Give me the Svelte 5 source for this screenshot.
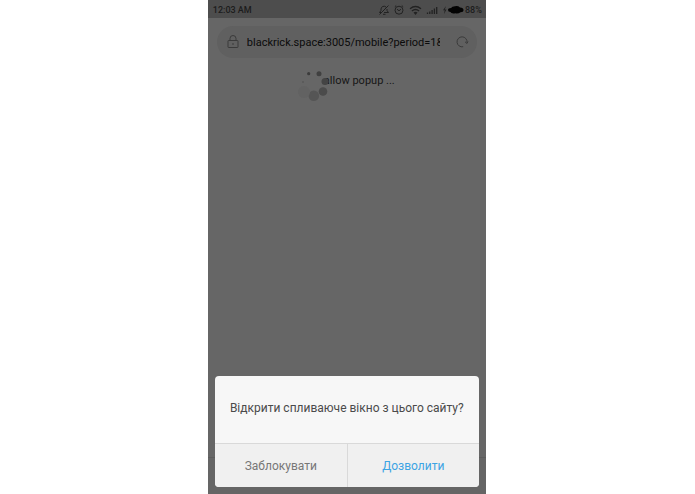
<script>
  let address = $state('blackrick.space:3005/mobile?period=1&');

  const dots = [
    { x: 6, y: 14, r: 0.7, color: '#4a4a4a' },
    { x: 11.7, y: 5.7, r: 1.6, color: '#3c3c3c' },
    { x: 22, y: 5.7, r: 2.5, color: '#404040' },
    { x: 28, y: 13.5, r: 3.5, color: '#444444' },
    { x: 26, y: 23.5, r: 4.3, color: '#4b4b4b' },
    { x: 16.8, y: 27.8, r: 5.3, color: '#555555' },
    { x: 7, y: 24, r: 6, color: '#626262' },
  ];
</script>

<style>
  :global(body) {
    margin: 0;
    background: #fff;
  }

  .phone {
    display: flex;
    flex-direction: column;
    width: 40%;
    min-height: 100vh;
    margin-left: 29.9%;
    /* the hairline is the top edge of the dimmed toolbar behind the dialog */
    background: linear-gradient(to top, #656565 36px, #5c5c5c 36px, #5c5c5c 37px, #666 37px);
    font-family: Roboto, "Noto Sans", sans-serif;
  }

  .status {
    display: flex;
    align-items: center;
    justify-content: space-between;
    box-sizing: border-box;
    height: 18px;
    padding: 1px 4px 0 5px;
    background: #4d4d4d;
    color: #1c1c1c;
    font-size: 9px;
    font-weight: 500;
  }

  .indicators {
    display: flex;
    align-items: center;
  }

  .indicators svg {
    display: block;
  }

  .address {
    display: flex;
    align-items: center;
    height: 32px;
    margin: 8px 9px 0;
    padding: 0 8px 0 9px;
    border-radius: 16px;
    background: #606060;
  }

  .address input {
    flex: 1;
    min-width: 0;
    margin: 0 15px 0 7px;
    padding: 0;
    border: 0;
    outline: 0;
    background: none;
    color: #0b0b0b;
    font: 11px Roboto, "Noto Sans", sans-serif;
  }

  .reload {
    display: flex;
    padding: 0;
    border: 0;
    background: none;
  }

  .page {
    flex: 1;
    padding-top: 15px;
    text-align: center;
  }

  .message {
    position: relative;
    display: inline-block;
    margin: 0;
    padding-left: 25px;
    color: #161616;
    font-size: 11px;
    line-height: 16px;
    vertical-align: top;
  }

  .spinner {
    position: absolute;
    top: -5px;
    left: -2px;
  }

  .dialog {
    margin: 0 7px 7px;
    border-radius: 4px;
    overflow: hidden;
    background: #f7f7f7;
  }

  .dialog p {
    margin: 0;
    padding: 22px 8px 25px;
    color: #4a4a4a;
    font-size: 12px;
    line-height: 20px;
    text-align: center;
  }

  .actions {
    display: grid;
    grid-template-columns: 1fr 1fr;
    border-top: 1px solid #d9d9d9;
  }

  .actions button {
    height: 43px;
    padding: 0;
    border: 0;
    background: #f0f0f0;
    color: #777;
    font: 12px Roboto, "Noto Sans", sans-serif;
  }

  .actions .allow {
    border-left: 1px solid #d9d9d9;
    color: #3ca4e4;
  }
</style>

<main class="phone">
  <header class="status">
    <time>12:03 AM</time>
    <div class="indicators">
      <svg width="70" height="12" viewBox="0 0 70 12" fill="none" stroke="#222" aria-hidden="true">
        <!-- muted bell -->
        <path d="M5 8.500H2.500L4 6.500V5a3 3 0 0 1 5-2M10 5v1.500l1.500 2H7M6 10.300h2.500M11.500 1.500l-9 9" />
        <!-- alarm clock -->
        <circle cx="22" cy="6.200" r="4" />
        <path d="M20 5.200l2 1.600 2-1.600M17.800 2.800l1.400-1.300M26.200 2.800l-1.400-1.300" />
        <!-- wi-fi -->
        <path d="M33 4.800q5.500-4.600 11 0M34.900 7q3.600-3 7.200 0" stroke-width="1.300" />
        <path d="M36.500 8.500q2-1.600 4 0l-2 2.500z" fill="#222" stroke="none" />
        <!-- signal -->
        <path d="M50.500 10V8.500M52.800 10V7.500M55.100 10V6M57.400 10V4.500M59.700 10V3" stroke-width="1.300" />
        <path d="M69 2l-3 4.300h1.700l-.7 3.700 2.500-4.500h-1.700z" fill="#222" stroke="none" />
      </svg>
      <svg width="18" height="12" viewBox="0 0 18 12" aria-hidden="true">
        <path d="M1 6q0-2 3-2 1-1.600 4-1.800 3-.6 5 1.200 3.500.2 3.500 2.600 0 2.200-3 2.300-2.500 1.700-5 1Q4 10 3.500 8 1 8 1 6z" fill="#030303" />
      </svg>
      <span>88%</span>
    </div>
  </header>

  <div class="address">
    <svg width="14" height="16" viewBox="0 0 14 16" fill="none" stroke="#3a3a3a" aria-hidden="true">
      <path d="M4 7V4.500a3 3 0 0 1 6 0V7" />
      <rect x="2" y="6.500" width="10" height="7" rx="0.500" />
      <path d="M7 9v2" />
    </svg>
    <input type="text" aria-label="Address" bind:value={address} />
    <button class="reload" type="button" aria-label="Reload">
      <svg width="14" height="14" viewBox="0 0 14 14" fill="none" stroke="#3a3a3a">
        <path d="M8.200 11.700A5 5 0 1 1 12 7.500M10 6.800l2 1.700 1-2" />
      </svg>
    </button>
  </div>

  <section class="page">
    <p class="message">
      allow popup ...
      <svg class="spinner" width="34" height="34" viewBox="0 0 34 34" aria-hidden="true">
        {#each dots as dot}
          <circle cx={dot.x} cy={dot.y} r={dot.r} fill={dot.color} />
        {/each}
      </svg>
    </p>
  </section>

  <div class="dialog" role="dialog" aria-labelledby="question">
    <p id="question">Відкрити спливаюче вікно з цього сайту?</p>
    <div class="actions">
      <button type="button">Заблокувати</button>
      <button class="allow" type="button">Дозволити</button>
    </div>
  </div>
</main>
